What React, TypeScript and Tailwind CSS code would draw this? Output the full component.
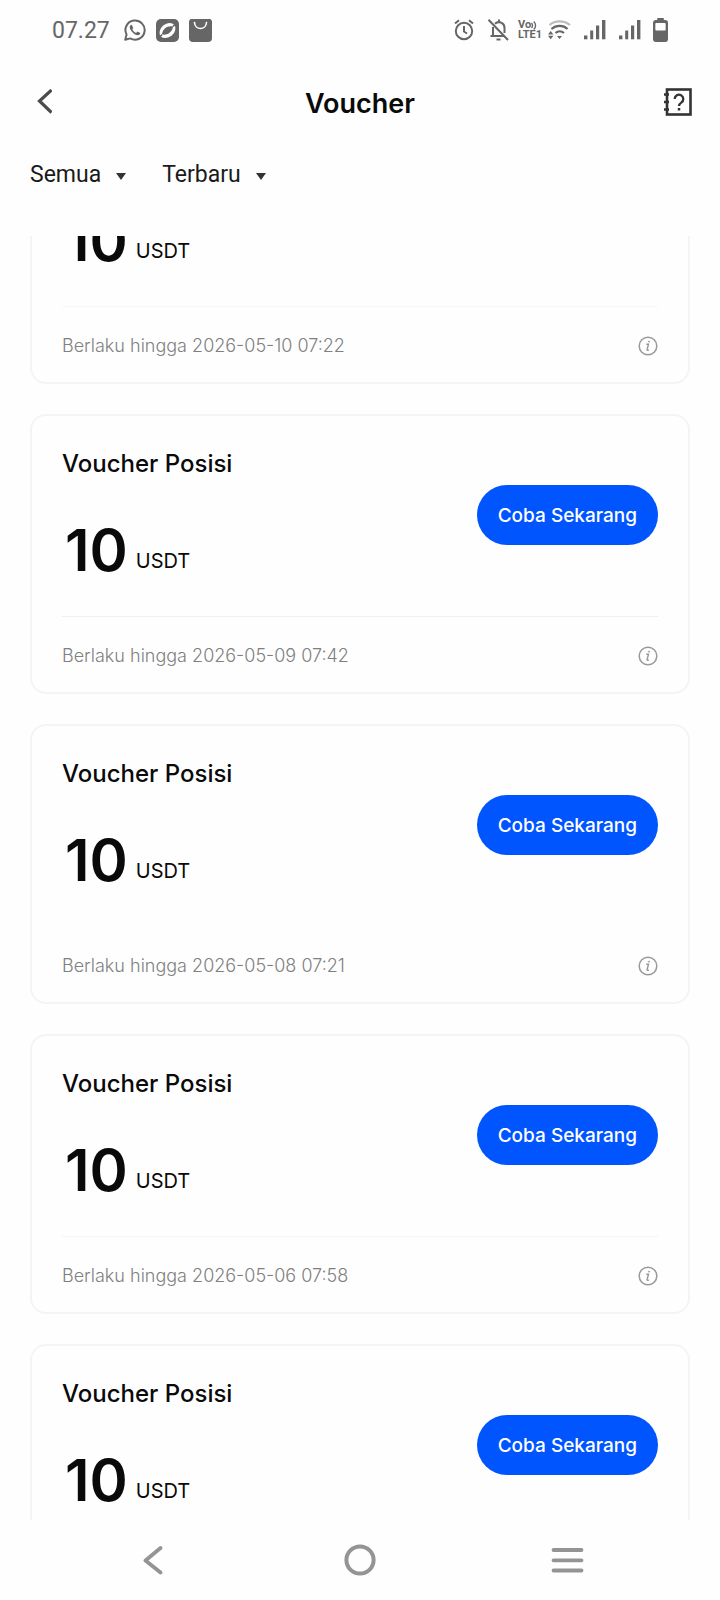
import { useLayoutEffect, useRef } from "react";

type Voucher = { id: number; amount: number; expires?: string; divider: string };

const vouchers: Voucher[] = [
  { id: 1, amount: 10, expires: "2026-05-10 07:22", divider: "border-[#f7f7f7]" },
  { id: 2, amount: 10, expires: "2026-05-09 07:42", divider: "border-[#f0f0f0]" },
  { id: 3, amount: 10, expires: "2026-05-08 07:21", divider: "border-[#fdfdfd]" },
  { id: 4, amount: 10, expires: "2026-05-06 07:58", divider: "border-[#f5f5f5]" },
  { id: 5, amount: 10, divider: "border-[#f5f5f5]" },
];

function SignalIcon() {
  return (
    <svg width="22" height="20" viewBox="0 0 22 20" fill="#666" aria-hidden="true">
      <rect x="0" y="15.5" width="3.4" height="3.8" />
      <rect x="6.2" y="10.5" width="3" height="8.8" />
      <rect x="12" y="5.5" width="3.2" height="13.8" />
      <rect x="18" y="0" width="3.4" height="19.3" />
    </svg>
  );
}

function StatusBar() {
  return (
    <div className="flex h-[60px] shrink-0 items-center justify-between pr-[52px] pl-[52px] font-['Roboto',sans-serif] text-[23px] text-[#666]">
      <div className="flex items-center gap-[10px]">
        <span className="mr-1 pt-[2px]">07.27</span>
        <svg width="22" height="22" viewBox="0 0 22 22" fill="none" aria-hidden="true">
          <path d="M1.2 20.8 2.6 15.6A9.6 9.6 0 1 1 6.3 19.4Z" stroke="#666" strokeWidth="2" strokeLinejoin="round" />
          <path d="M7.7 5.7c-.7-.2-2 .9-2 2.3 0 3.3 4.600 8.200 8.200 8.200 1.500 0 2.500-1.300 2.400-2.300l-2.800-1.500-1.500 1.500c-1.500-.6-3.100-2.100-3.700-3.600l1-1.400z" fill="#666" />
        </svg>
        <svg width="23" height="23" viewBox="0 0 23 23" aria-hidden="true">
          <rect width="23" height="23" rx="5" fill="#666" />
          <ellipse cx="11.500" cy="11.500" rx="8.800" ry="6.600" transform="rotate(-40 11.500 11.500)" fill="#fff" />
          <path d="M6 15.500C6.500 10 11 6.500 17 7.500 16.500 12.500 12 16.500 6 15.500Z" fill="#666" />
          <path d="M3 19 6 15.500M17 7.500 20 4" stroke="#666" strokeWidth="1.500" />
        </svg>
        <svg width="23" height="23" viewBox="0 0 23 23" fill="none" aria-hidden="true">
          <path d="M1.500 0h20l1.500 2v17a4 4 0 0 1-4 4H4a4 4 0 0 1-4-4V2z" fill="#666" />
          <path d="M5.500 3.500c.5 8 11.500 8 12 0" stroke="#fff" strokeWidth="1.600" strokeLinecap="round" />
        </svg>
      </div>
      <div className="flex items-center">
        <svg className="mr-[14px]" width="20" height="22" viewBox="0 0 20 22" fill="none" stroke="#666" strokeWidth="2" aria-hidden="true">
          <circle cx="10" cy="12" r="8.200" />
          <path d="M10 7v5.500l3 2M1 4.500 5 1.200M19 4.500 15 1.200" />
        </svg>
        <svg className="mr-[9px]" width="21" height="22" viewBox="0 0 21 22" fill="none" stroke="#666" strokeWidth="2" aria-hidden="true">
          <path d="M7 4.800A5.600 5.600 0 0 1 16.500 9v5M5 8v9h11M2.500 17H5M8.500 20.500h4M11 .5v3M.5 .8 20 21" />
        </svg>
        <div className="mr-[6px] flex w-6 flex-col text-[11px] leading-[10px] font-bold">
          <span className="flex items-center">
            Vo
            <svg width="6" height="9" viewBox="0 0 6 9" fill="none" stroke="#666" strokeWidth="1.300" aria-hidden="true">
              <path d="M.5 2c1.300 1.600 1.300 3.400 0 5M2.800 .5c2.400 2.700 2.400 5.300 0 8" />
            </svg>
          </span>
          <span>LTE1</span>
        </div>
        <svg className="mr-[13px]" width="23" height="20" viewBox="0 0 23 20" fill="none" strokeWidth="2.200" aria-hidden="true">
          <path d="M1.500 5C7 .2 16 .2 22 5" stroke="#bbb" />
          <path d="M3.500 9c4.500-4.200 12-4.200 16 0M7.500 13c2.500-2.200 6-2.200 8.500 0" stroke="#666" />
          <path d="M0 14.500 2.700 11l2.700 3.500zM0 15.700h5.400L2.700 19.200zM9 16h5l-2.500 3z" fill="#666" />
        </svg>
        <span className="mr-[13px]"><SignalIcon /></span>
        <span className="mr-[12px]"><SignalIcon /></span>
        <svg width="15" height="24" viewBox="0 0 16 24" preserveAspectRatio="none" aria-hidden="true">
          <path d="M4.500 0h7v2H13a3 3 0 0 1 3 3v16a3 3 0 0 1-3 3H3a3 3 0 0 1-3-3V5a3 3 0 0 1 3-3h1.500z" fill="#666" />
          <rect x="2.500" y="5" width="11" height="7.500" rx="1" fill="#fff" />
        </svg>
      </div>
    </div>
  );
}

function Header() {
  return (
    <header className="flex h-[84px] shrink-0 items-center justify-between px-7">
      <button type="button" aria-label="Kembali" className="flex h-10 w-10 items-center pl-2">
        <svg width="16" height="26" viewBox="0 0 16 26" fill="none" stroke="#4b4d4d" strokeWidth="3.200" aria-hidden="true">
          <path d="M15.500 1 3.500 12l12 11.500" />
        </svg>
      </button>
      <h1 className="pt-[3px] text-[27px] leading-8 font-semibold text-[#0a0a0a]">Voucher</h1>
      <button type="button" aria-label="Bantuan" className="flex h-10 w-10 items-center justify-end">
        <svg width="28" height="28" viewBox="0 0 28 28" fill="none" stroke="#333" aria-hidden="true">
          <rect x="3" y="1.500" width="23.500" height="25" strokeWidth="2.600" />
          <path d="M0 6.500h5M0 14h5M0 21.500h5" strokeWidth="2.400" />
          <path d="M10.700 11a4.300 4.300 0 1 1 6.600 3.600c-1.500 1-2.300 1.800-2.300 3.400" strokeWidth="2.300" />
          <path d="M15 20v2.500" strokeWidth="2.500" />
        </svg>
      </button>
    </header>
  );
}

function FilterButton({ label }: { label: string }) {
  return (
    <button type="button" aria-haspopup="listbox" className="flex items-center gap-[15px] font-['Roboto',sans-serif] text-[23px] leading-8 text-[#1a1a1a]">
      {label}
      <svg width="10" height="7" viewBox="0 0 10 7" fill="#333" className="mt-[2px]" aria-hidden="true">
        <path d="M0 0h10L5 7z" />
      </svg>
    </button>
  );
}

function VoucherCard({ voucher }: { voucher: Voucher }) {
  return (
    <li className="min-h-[280px] rounded-[16px] border-2 border-[#f4f4f4] px-[30px]">
      <div className={`flex items-center justify-between border-b pt-8 pb-[34px] ${voucher.divider}`}>
        <div>
          <h2 className="text-[24px] leading-8 font-medium text-[#0a0a0a]">Voucher Posisi</h2>
          <p className="mt-[38px] flex h-16 items-end gap-2 pl-[3px] text-[#0a0a0a]">
            <span className="text-[58px] leading-[64px] font-semibold">{voucher.amount}</span>
            <span className="pb-[9px] text-[20px] leading-6">USDT</span>
          </p>
        </div>
        <button type="button" className="h-[60px] rounded-full bg-[#0055ff] px-[21px] pt-[2px] text-[19px] font-medium text-white">
          Coba Sekarang
        </button>
      </div>
      {voucher.expires && (
        <div className="flex h-[75px] items-center justify-between pt-[2px]">
          <p className="text-[18px] leading-6 font-light text-[#808080]">Berlaku hingga {voucher.expires}</p>
          <button type="button" aria-label="Detail voucher">
            <svg width="20" height="20" viewBox="0 0 20 20" fill="none" stroke="#999" aria-hidden="true">
              <circle cx="10" cy="10" r="8.800" strokeWidth="1.500" />
              <path d="M8.300 8.300h2.200l-1.400 5.200c-.2 1 .8.900 1.700.3" strokeWidth="1.400" />
              <circle cx="11" cy="5.600" r=".6" fill="#999" strokeWidth=".8" />
            </svg>
          </button>
        </div>
      )}
    </li>
  );
}

function NavigationBar() {
  return (
    <nav className="flex h-20 shrink-0 items-center justify-around px-[49px]">
      <button type="button" aria-label="Kembali" className="flex h-12 w-12 items-center justify-center">
        <svg width="20" height="30" viewBox="0 0 20 30" fill="none" stroke="#949494" strokeWidth="3.800" strokeLinecap="round" strokeLinejoin="round" aria-hidden="true">
          <path d="M17.500 3 2.500 15.500l15 12" />
        </svg>
      </button>
      <button type="button" aria-label="Beranda" className="flex h-12 w-12 items-center justify-center">
        <svg width="32" height="32" viewBox="0 0 32 32" fill="none" stroke="#949494" strokeWidth="4" aria-hidden="true">
          <circle cx="16" cy="16" r="13.600" />
        </svg>
      </button>
      <button type="button" aria-label="Menu" className="flex h-12 w-12 items-center justify-center">
        <svg width="33" height="26" viewBox="0 0 33 26" stroke="#949494" strokeWidth="3.800" strokeLinecap="round" aria-hidden="true">
          <path d="M2.500 3h28M2.500 13.300h28M2.500 23.500h28" />
        </svg>
      </button>
    </nav>
  );
}

export default function App() {
  const list = useRef<HTMLElement>(null);

  useLayoutEffect(() => {
    if (list.current) list.current.scrollTop = 132;
  }, []);

  return (
    <div className="flex h-screen flex-col bg-[#fefefe] font-['Inter',sans-serif]">
      <StatusBar />
      <Header />
      <div className="flex h-[92px] shrink-0 items-start gap-9 px-[30px] pt-[15px]">
        <FilterButton label="Semua" />
        <FilterButton label="Terbaru" />
      </div>
      <main ref={list} className="min-h-0 flex-1 overflow-y-auto px-[30px] [scrollbar-width:none]">
        <ul className="flex flex-col gap-[30px]">
          {vouchers.map((voucher) => (
            <VoucherCard key={voucher.id} voucher={voucher} />
          ))}
        </ul>
      </main>
      <NavigationBar />
    </div>
  );
}
